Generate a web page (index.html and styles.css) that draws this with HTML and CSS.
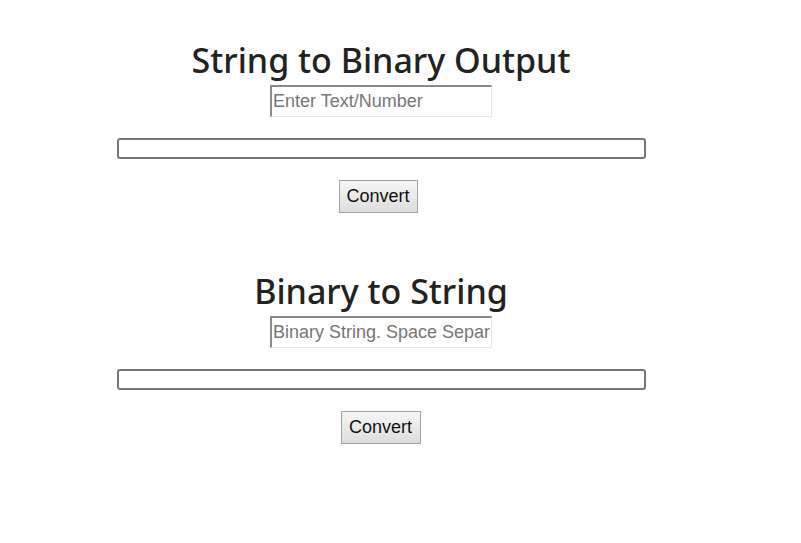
FILE: index.html
```html
<!DOCTYPE html>
<html>
<head>
<meta charset="utf-8">
<link rel="stylesheet" href="styles.css">
</head>
<body>
<div class="page">
  <section class="block">
    <h1 class="title">String to Binary Output</h1>
    <input class="field" type="text" placeholder="Enter Text/Number">
    <div class="output"></div>
    <button class="btn">Convert</button>
  </section>
  <section class="block second">
    <h1 class="title">Binary to String</h1>
    <input class="field" type="text" placeholder="Binary String. Space Separated">
    <div class="output"></div>
    <button class="btn btn-wide">Convert</button>
  </section>
</div>
</body>
</html>
```
FILE: styles.css
```css
html, body {
  margin: 0;
  padding: 0;
  background: #fff;
}
.page {
  width: 762px;
  display: flex;
  flex-direction: column;
}
.block {
  display: flex;
  flex-direction: column;
  align-items: center;
  padding-top: 35px;
}
.second {
  padding-top: 53px;
}
.title {
  margin: 0;
  font-family: "Noto Sans", sans-serif;
  font-weight: 500;
  font-size: 34px;
  line-height: 50px;
  color: #222;
}
.field {
  box-sizing: border-box;
  width: 222px;
  height: 32px;
  margin: 0;
  padding: 0 1px;
  border-style: solid;
  border-width: 2px 1px 1px 2px;
  border-color: #8a8a8a #e6e6e6 #e6e6e6 #8a8a8a;
  font-family: "Liberation Sans", Arial, sans-serif;
  font-size: 18px;
  color: #222;
  background: #fff;
  outline: none;
}
.field::placeholder {
  color: #767676;
}
.output {
  box-sizing: border-box;
  width: 529px;
  height: 21px;
  margin-top: 21px;
  border: 2px solid #777;
  border-radius: 3px;
}
.btn {
  box-sizing: border-box;
  width: 79px;
  height: 33px;
  margin-top: 21px;
  margin-right: 6px;
  padding: 0;
  border: 1px solid #a3a3a3;
  border-radius: 0;
  background: linear-gradient(#f6f6f6, #dddddd);
  font-family: "Liberation Sans", Arial, sans-serif;
  font-size: 18px;
  color: #111;
}
.btn-wide {
  width: 80px;
  margin-right: 1px;
}
```
